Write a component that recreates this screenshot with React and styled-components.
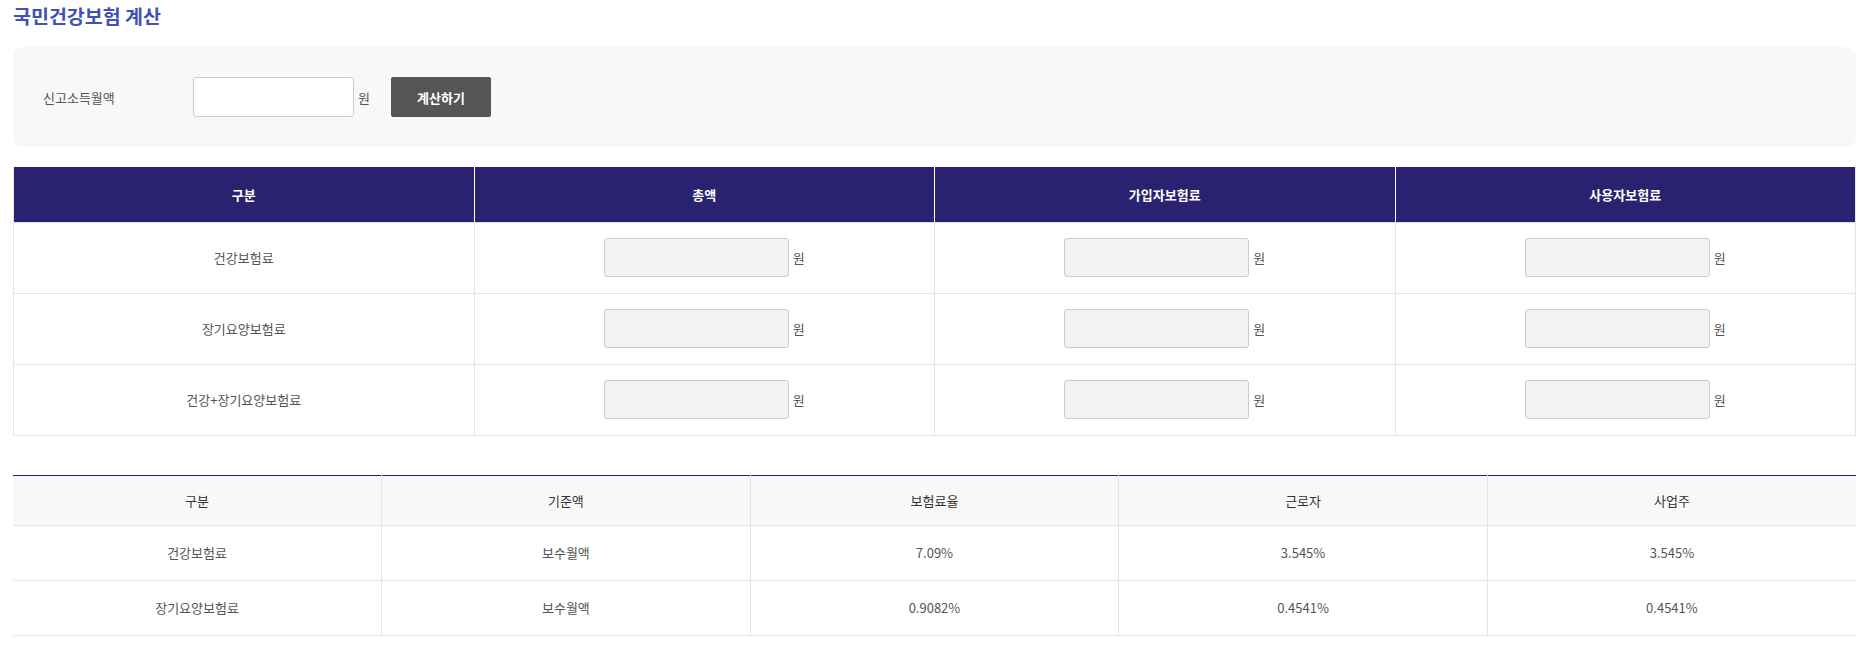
import styled, { createGlobalStyle } from "styled-components";

const GlobalStyle = createGlobalStyle`
  body {
    margin: 0;
    background: #fff;
    font-family: "Noto Sans CJK KR", "Noto Sans", sans-serif;
    color: #555;
  }
  * { box-sizing: border-box; }
`;

const Page = styled.div`
  padding: 0 13px;
`;

const Title = styled.h2`
  margin: 0 0 15px;
  height: 32px;
  line-height: 32px;
  font-size: 19.5px;
  font-weight: 700;
  color: #3f51b5;
`;

const SearchBox = styled.div`
  height: 100px;
  border-radius: 10px;
  background: #f8f8f8;
  display: flex;
  align-items: center;
  padding-left: 30px;
`;

const Label = styled.span`
  width: 150px;
  font-size: 13px;
  color: #555;
`;

const Field = styled.input`
  width: 161px;
  height: 40px;
  border: 1px solid #ccc;
  border-radius: 3px;
  background: ${(p) => (p.readOnly ? "#f2f2f2" : "#fff")};
  font-family: inherit;
  font-size: 13px;
  padding: 0 8px;
  outline: none;

  &[data-size="cell"] {
    width: 185px;
    height: 39px;
  }
`;

const Unit = styled.span`
  font-size: 13px;
  color: #555;
  margin-left: 4px;
`;

const CalcButton = styled.button`
  width: 100px;
  height: 40px;
  margin-left: 21px;
  border: none;
  border-radius: 2px;
  background: #555;
  color: #fff;
  font-family: inherit;
  font-size: 13px;
  font-weight: 700;
  cursor: pointer;
`;

const ResultTable = styled.table`
  width: 100%;
  margin-top: 20px;
  border-collapse: collapse;
  table-layout: fixed;
  border: 1px solid #e5e5e5;
  border-top: none;

  th {
    height: 55px;
    background: #2a2270;
    color: #fff;
    font-size: 13px;
    font-weight: 700;
    border-left: 1px solid #fff;
    border-bottom: 1px solid #ddd;
  }
  th:first-child { border-left: none; }

  td {
    height: 71px;
    text-align: center;
    font-size: 13px;
    color: #555;
    border: 1px solid #e5e5e5;
  }
`;

const CellGroup = styled.div`
  display: inline-flex;
  align-items: center;
`;

const RateTable = styled.table`
  width: 100%;
  margin-top: 39px;
  border-collapse: collapse;
  table-layout: fixed;
  border-top: 1px solid #221b66;

  th {
    height: 50px;
    background: #f8f8f8;
    color: #333;
    font-size: 13px;
    font-weight: 400;
    border-left: 1px solid #e5e5e5;
    border-bottom: 1px solid #e5e5e5;
  }

  td {
    height: 55px;
    text-align: center;
    font-size: 13px;
    color: #555;
    border-left: 1px solid #e5e5e5;
    border-bottom: 1px solid #e5e5e5;
  }

  th:first-child, td:first-child { border-left: none; }
`;

const resultRows = ["건강보험료", "장기요양보험료", "건강+장기요양보험료"];

const rateRows = [
  ["건강보험료", "보수월액", "7.09%", "3.545%", "3.545%"],
  ["장기요양보험료", "보수월액", "0.9082%", "0.4541%", "0.4541%"],
];

function AmountCell() {
  return (
    <td>
      <CellGroup>
        <Field data-size="cell" readOnly />
        <Unit>원</Unit>
      </CellGroup>
    </td>
  );
}

export default function App() {
  return (
    <>
      <GlobalStyle />
      <Page>
        <Title>국민건강보험 계산</Title>
        <SearchBox>
          <Label>신고소득월액</Label>
          <Field type="text" />
          <Unit>원</Unit>
          <CalcButton>계산하기</CalcButton>
        </SearchBox>

        <ResultTable>
          <thead>
            <tr>
              <th>구분</th>
              <th>총액</th>
              <th>가입자보험료</th>
              <th>사용자보험료</th>
            </tr>
          </thead>
          <tbody>
            {resultRows.map((name) => (
              <tr key={name}>
                <td>{name}</td>
                <AmountCell />
                <AmountCell />
                <AmountCell />
              </tr>
            ))}
          </tbody>
        </ResultTable>

        <RateTable>
          <thead>
            <tr>
              <th>구분</th>
              <th>기준액</th>
              <th>보험료율</th>
              <th>근로자</th>
              <th>사업주</th>
            </tr>
          </thead>
          <tbody>
            {rateRows.map((row) => (
              <tr key={row[0]}>
                {row.map((v, i) => (
                  <td key={i}>{v}</td>
                ))}
              </tr>
            ))}
          </tbody>
        </RateTable>
      </Page>
    </>
  );
}
